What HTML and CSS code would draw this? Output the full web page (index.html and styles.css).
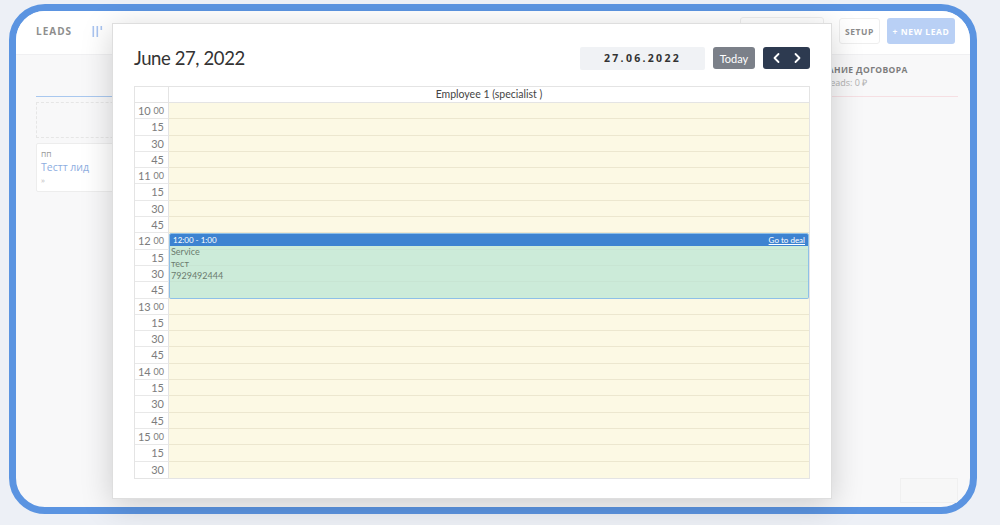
FILE: index.html
```html
<!DOCTYPE html>
<html lang="en">
<head>
<meta charset="utf-8">
<title>Leads — calendar</title>
<link rel="stylesheet" href="styles.css">
</head>
<body>
<div class="frame">
  <header class="topbar">
    <div class="tb-left">
      <span class="brand">LEADS</span>
      <svg class="bars" width="12" height="13" viewBox="0 0 12 13"><rect x="0.5" y="1" width="1.6" height="11" fill="#a9c4f0"/><rect x="4.5" y="1" width="1.6" height="11" fill="#a9c4f0"/><rect x="8.5" y="1" width="1.6" height="4" fill="#a9c4f0"/></svg>
    </div>
    <div class="tb-right">
      <div class="ghost-box"></div>
      <button class="btn-setup">SETUP</button>
      <button class="btn-new">+ NEW LEAD</button>
    </div>
  </header>
  <main class="board">
    <section class="col col-left">
      <div class="col-head head-blue"></div>
      <div class="dropzone"></div>
      <div class="card">
        <div class="card-top">пп</div>
        <div class="card-name">Тестт лид</div>
        <div class="card-foot">»</div>
      </div>
    </section>
    <section class="col col-right">
      <div class="col-head head-pink">
        <div class="col-title">ПОДПИСАНИЕ ДОГОВОРА</div>
        <div class="col-sum">Sum of leads: 0 ₽</div>
      </div>
      <div class="corner-box"></div>
    </section>
  </main>
</div>

<div class="modal">
  <div class="modal-head">
    <h1 class="modal-title">June 27, 2022</h1>
    <div class="controls">
      <div class="date-field">27.06.2022</div>
      <button class="btn-today">Today</button>
      <div class="nav">
        <svg width="12" height="12" viewBox="0 0 12 12"><path d="M7.5 2 L3.5 6 L7.5 10" fill="none" stroke="#fff" stroke-width="1.8" stroke-linecap="round" stroke-linejoin="round"/></svg>
        <svg width="12" height="12" viewBox="0 0 12 12"><path d="M4.5 2 L8.5 6 L4.5 10" fill="none" stroke="#fff" stroke-width="1.8" stroke-linecap="round" stroke-linejoin="round"/></svg>
      </div>
    </div>
  </div>

  <div class="cal">
    <div class="cal-head">
      <div class="cal-corner"></div>
      <div class="cal-res">Employee 1 (specialist )</div>
    </div>
    <div class="cal-body">
      <div class="t hour">10 <sup>00</sup></div><div class="s"></div>
      <div class="t">15</div><div class="s"></div>
      <div class="t">30</div><div class="s"></div>
      <div class="t">45</div><div class="s"></div>
      <div class="t hour">11 <sup>00</sup></div><div class="s"></div>
      <div class="t">15</div><div class="s"></div>
      <div class="t">30</div><div class="s"></div>
      <div class="t">45</div><div class="s"></div>
      <div class="t hour">12 <sup>00</sup></div><div class="s"></div>
      <div class="t">15</div><div class="s"></div>
      <div class="t">30</div><div class="s"></div>
      <div class="t">45</div><div class="s"></div>
      <div class="t hour">13 <sup>00</sup></div><div class="s"></div>
      <div class="t">15</div><div class="s"></div>
      <div class="t">30</div><div class="s"></div>
      <div class="t">45</div><div class="s"></div>
      <div class="t hour">14 <sup>00</sup></div><div class="s"></div>
      <div class="t">15</div><div class="s"></div>
      <div class="t">30</div><div class="s"></div>
      <div class="t">45</div><div class="s"></div>
      <div class="t hour">15 <sup>00</sup></div><div class="s"></div>
      <div class="t">15</div><div class="s"></div>
      <div class="t last">30</div><div class="s last"></div>

      <div class="event">
        <div class="event-bar"><span>12:00 - 1:00</span><a class="event-link" href="#">Go to deal</a></div>
        <div class="event-body">
          <div>Service</div>
          <div>тест</div>
          <div>7929492444</div>
        </div>
      </div>
    </div>
  </div>
</div>
</body>
</html>
```

FILE: styles.css
```css
* { box-sizing: border-box; }

html, body {
  margin: 0;
  padding: 0;
}

body {
  width: 1000px;
  height: 525px;
  background: #edf0f6;
  font-family: "Open Sans", "Liberation Sans", sans-serif;
  padding: 4px 0 0 9px;
  overflow: hidden;
  position: relative;
}

/* ---------- background app frame ---------- */
.frame {
  width: 968px;
  height: 510px;
  border: 7px solid #5b94e1;
  border-radius: 36px;
  background: #f8f8f9;
  overflow: hidden;
  display: flex;
  flex-direction: column;
}

.topbar {
  height: 44px;
  flex: none;
  background: #fff;
  border-bottom: 1px solid #f0f0f2;
  display: flex;
  align-items: flex-start;
  justify-content: space-between;
  padding: 7px 15px 0 20px;
}

.tb-left {
  display: flex;
  align-items: center;
  height: 26px;
  gap: 20px;
}

.brand {
  font-size: 10px;
  font-weight: 700;
  color: #8e8e8e;
  letter-spacing: 1px;
}

.bars { display: block; }

.tb-right {
  display: flex;
  align-items: flex-start;
}

.ghost-box {
  width: 84px;
  height: 28px;
  margin-top: -1px;
  border: 1px solid #eeeeee;
  border-radius: 3px;
  margin-right: 15px;
}

.btn-setup,
.btn-new {
  height: 26px;
  border-radius: 3px;
  font-family: "Open Sans", "Liberation Sans", sans-serif;
  font-size: 8.5px;
  font-weight: 700;
  letter-spacing: 0.6px;
  padding: 0;
  cursor: pointer;
}

.btn-setup {
  width: 41px;
  background: #fff;
  border: 1px solid #eeeeee;
  color: #8c8c8c;
  margin-right: 7px;
}

.btn-new {
  width: 68px;
  background: #b9d0f5;
  border: none;
  color: #fff;
}

.board {
  flex: 1;
  display: flex;
  justify-content: space-between;
  padding: 0 12px 4px 20px;
}

.col {
  width: 162px;
  display: flex;
  flex-direction: column;
}

.col-head {
  height: 42px;
  padding-top: 9px;
  flex: none;
}

.head-blue { border-bottom: 1px solid #a9c8ef; }
.head-pink { border-bottom: 1px solid #f6dfe3; }

.col-title {
  font-size: 8.5px;
  font-weight: 700;
  color: #7d7d7d;
  letter-spacing: 0.4px;
  line-height: 12px;
  white-space: nowrap;
  margin-left: -9px;
}

.col-sum {
  font-size: 9px;
  color: #b0b0b0;
  line-height: 14px;
  white-space: nowrap;
}

.dropzone {
  margin-top: 5px;
  height: 36px;
  border: 1px dashed #e6e6e6;
}

.card {
  margin-top: 5px;
  height: 49px;
  background: #fff;
  border: 1px solid #ededed;
  border-radius: 2px;
  padding: 4px 4px;
}

.card-top {
  font-size: 8.5px;
  color: #9a9a9a;
  line-height: 12px;
}

.card-name {
  font-size: 10.5px;
  color: #8eaedf;
  line-height: 14px;
}

.card-foot {
  font-size: 8px;
  color: #bdbdbd;
  line-height: 12px;
}

.corner-box {
  margin-top: auto;
  align-self: flex-end;
  width: 58px;
  height: 25px;
  border: 1px solid #f0f0f0;
  background: #f7f7f7;
}

/* ---------- modal ---------- */
.modal {
  position: absolute;
  left: 112px;
  top: 23px;
  width: 720px;
  height: 476px;
  background: #fff;
  border: 1px solid #dedede;
  box-shadow: 0 6px 30px rgba(0, 0, 0, 0.18);
  padding: 22px 21px 21px 20px;
  font-family: Lato, "Open Sans", sans-serif;
}

.modal-head {
  height: 24px;
  display: flex;
  align-items: center;
  justify-content: space-between;
  padding-left: 1px;
}

.modal-title {
  margin: 0;
  font-size: 18.5px;
  font-weight: 400;
  color: #333;
  letter-spacing: -0.4px;
  line-height: 24px;
}

.controls {
  display: flex;
  align-items: center;
}

.date-field {
  width: 125px;
  height: 23px;
  background: #f0f2f5;
  border-radius: 2px;
  font-family: "Open Sans", "Liberation Sans", sans-serif;
  font-size: 10.5px;
  font-weight: 700;
  letter-spacing: 2.3px;
  color: #333;
  display: flex;
  align-items: center;
  justify-content: center;
  margin-right: 8px;
}

.btn-today {
  width: 42px;
  height: 22px;
  border: none;
  border-radius: 3px;
  background: #7b8089;
  color: #fff;
  font-family: Lato, sans-serif;
  font-size: 11px;
  padding: 0;
  margin-right: 8px;
}

.nav {
  width: 47px;
  height: 22px;
  border-radius: 3px;
  background: #2d3a50;
  display: flex;
  align-items: center;
  justify-content: space-between;
  padding: 0 7px 0 8px;
}

.nav svg { display: block; }

/* ---------- calendar grid ---------- */
.cal {
  margin-top: 16px;
  margin-left: 1px;
  border: 1px solid #e4e4e4;
}

.cal-head {
  display: grid;
  grid-template-columns: 34px 1fr;
  height: 16px;
  border-bottom: 1px solid #e4e4e4;
}

.cal-corner { border-right: 1px solid #e4e4e4; }

.cal-res {
  font-size: 10.5px;
  color: #444;
  text-align: center;
  line-height: 15px;
}

.cal-body {
  position: relative;
  display: grid;
  grid-template-columns: 34px 1fr;
  grid-auto-rows: 16.3px;
}

.t {
  border-right: 1px solid #e4e4e4;
  border-bottom: 1px solid #e8e8e8;
  text-align: right;
  padding-right: 4px;
  font-size: 11px;
  color: #7c7c7c;
  line-height: 16px;
}

.t sup {
  font-size: 9px;
  vertical-align: 0;
  position: relative;
  top: -1px;
}

.s {
  background: #fcf9e4;
  border-bottom: 1px solid #ece7cf;
}

.t.last, .s.last { border-bottom: none; }

.event {
  position: absolute;
  top: 130.4px;
  left: 34px;
  right: 0;
  height: 65.2px;
  border: 1px solid #8ec0e8;
  border-radius: 2px;
  overflow: hidden;
  display: flex;
  flex-direction: column;
}

.event-bar {
  height: 12px;
  flex: none;
  background: #3d83d1;
  color: #fff;
  font-size: 8px;
  line-height: 12px;
  padding: 0 3px 0 3px;
  display: flex;
  justify-content: space-between;
}

.event-link {
  color: #fff;
  text-decoration: underline;
}

.event-body {
  flex: 1;
  background: rgba(186, 228, 212, 0.72);
  font-size: 9px;
  color: #6b7b6e;
  line-height: 11.6px;
  padding: 0 1px;
}
```
